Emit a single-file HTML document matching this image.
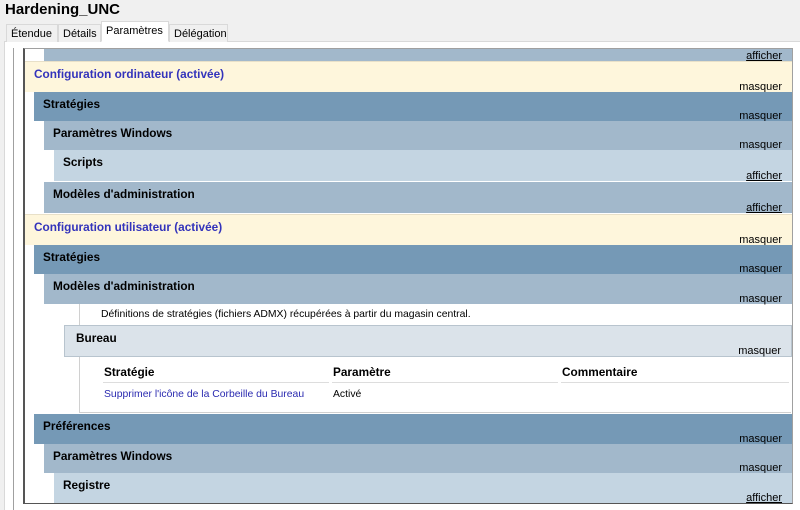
<!DOCTYPE html>
<html><head><meta charset="utf-8"><style>
*{margin:0;padding:0;box-sizing:border-box}
body{width:800px;height:510px;overflow:hidden;background:#f0f0f0;font-family:"Liberation Sans",Tahoma,sans-serif;font-size:11px;color:#000;position:relative}
.a{position:absolute}
.title{left:5px;top:1px;font-size:15px;font-weight:bold}
.tab{top:24px;height:18px;border:1px solid #d9d9d9;border-bottom:none;background:#f0f0f0;padding:3px 4px 0;font-size:11px}
.b{position:absolute;right:8px}
.b span.t{position:absolute;font-weight:bold;top:5px;left:9px;font-size:11.8px}
.b span.r{position:absolute;right:10px;bottom:-1px}
.u{text-decoration:underline}
.d{background:#7599b6}
.m{background:#a2b8cb}
.l{background:#c4d5e2}
.c{background:#fef6dc;border-top:1px solid #e8e0c8}
.c span.t{color:#3333bb}
.h{font-weight:bold;font-size:11.8px}
</style></head><body>
<div class="a title">Hardening_UNC</div>
<div class="a" style="left:4px;top:41px;width:796px;height:469px;background:#fff;border-left:1px solid #d9d9d9;border-top:1px solid #d9d9d9"></div>
<div class="a tab" style="left:6px;width:52px">Étendue</div>
<div class="a tab" style="left:58px;width:43px">Détails</div>
<div class="a tab" style="left:101px;top:21px;height:21px;width:68px;background:#fff;border-bottom:1px solid #fff">Paramètres</div>
<div class="a tab" style="left:169px;width:59px">Délégation</div>
<div class="a" style="left:13px;top:48px;width:1px;height:462px;background:#a0a0a0"></div>
<div class="a" style="left:23px;top:48px;width:770px;height:456px;border-left:2px solid #555;border-top:1px solid #a0a0a0;border-right:1px solid #a0a0a0;border-bottom:1px solid #555"></div>

<div class="b m" style="left:44px;top:49px;height:12px"><span class="r u">afficher</span></div>
<div class="b c" style="left:25px;top:61px;height:31px"><span class="t">Configuration ordinateur (activée)</span><span class="r">masquer</span></div>
<div class="b d" style="left:34px;top:92px;height:29px"><span class="t">Stratégies</span><span class="r">masquer</span></div>
<div class="b m" style="left:44px;top:121px;height:29px"><span class="t">Paramètres Windows</span><span class="r">masquer</span></div>
<div class="b l" style="left:54px;top:150px;height:31px"><span class="t">Scripts</span><span class="r u">afficher</span></div>
<div class="b m" style="left:44px;top:182px;height:31px"><span class="t">Modèles d'administration</span><span class="r u">afficher</span></div>
<div class="b c" style="left:25px;top:214px;height:31px"><span class="t">Configuration utilisateur (activée)</span><span class="r">masquer</span></div>
<div class="b d" style="left:34px;top:245px;height:29px"><span class="t">Stratégies</span><span class="r">masquer</span></div>
<div class="b m" style="left:44px;top:274px;height:30px"><span class="t">Modèles d'administration</span><span class="r">masquer</span></div>
<div class="a" style="left:79px;top:304px;width:1px;height:21px;background:#d0d0d0"></div>
<div class="a" style="left:101px;top:309px;font-size:10.4px">Définitions de stratégies (fichiers ADMX) récupérées à partir du magasin central.</div>
<div class="b" style="left:64px;top:325px;height:32px;background:#dbe3ea;border:1px solid #b8c4ce"><span class="t" style="left:11px">Bureau</span><span class="r">masquer</span></div>
<div class="a" style="left:79px;top:357px;width:1px;height:56px;background:#d0d0d0"></div>
<div class="a" style="left:79px;top:412px;width:712px;height:1px;background:#d0d0d0"></div>
<div class="a h" style="left:104px;top:365px">Stratégie</div>
<div class="a h" style="left:333px;top:365px">Paramètre</div>
<div class="a h" style="left:562px;top:365px">Commentaire</div>
<div class="a" style="left:103px;top:382px;width:226px;height:1px;background:#ddd"></div>
<div class="a" style="left:332px;top:382px;width:226px;height:1px;background:#ddd"></div>
<div class="a" style="left:561px;top:382px;width:228px;height:1px;background:#ddd"></div>
<div class="a" style="left:104px;top:389px;color:#2a2ab0;font-size:10.4px">Supprimer l'icône de la Corbeille du Bureau</div>
<div class="a" style="left:333px;top:389px;font-size:10.4px">Activé</div>
<div class="b d" style="left:34px;top:414px;height:30px"><span class="t">Préférences</span><span class="r">masquer</span></div>
<div class="b m" style="left:44px;top:444px;height:29px"><span class="t">Paramètres Windows</span><span class="r">masquer</span></div>
<div class="b l" style="left:54px;top:473px;height:30px"><span class="t">Registre</span><span class="r u">afficher</span></div>
</body></html>
